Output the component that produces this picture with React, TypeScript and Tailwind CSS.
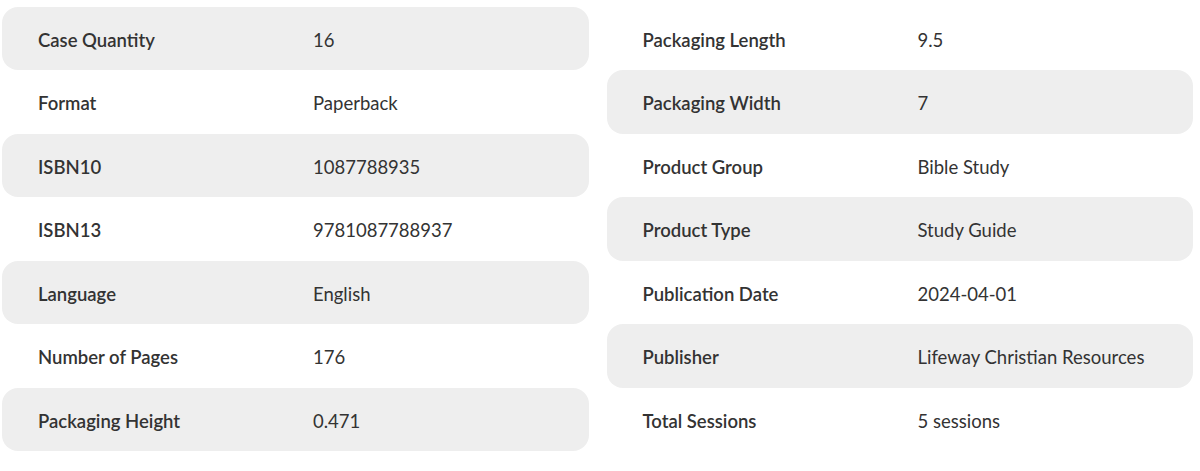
import React from "react";

const left: [string, string][] = [
  ["Case Quantity", "16"],
  ["Format", "Paperback"],
  ["ISBN10", "1087788935"],
  ["ISBN13", "9781087788937"],
  ["Language", "English"],
  ["Number of Pages", "176"],
  ["Packaging Height", "0.471"],
];

const right: [string, string][] = [
  ["Packaging Length", "9.5"],
  ["Packaging Width", "7"],
  ["Product Group", "Bible Study"],
  ["Product Type", "Study Guide"],
  ["Publication Date", "2024-04-01"],
  ["Publisher", "Lifeway Christian Resources"],
  ["Total Sessions", "5 sessions"],
];

function Column({ rows, shadeEven }: { rows: [string, string][]; shadeEven: boolean }) {
  return (
    <div className="flex flex-col">
      {rows.map(([k, v], i) => {
        const shaded = shadeEven ? i % 2 === 0 : i % 2 === 1;
        return (
          <div
            key={k}
            className={
              "flex h-[63.5px] items-center rounded-[16px] pl-[36px] pt-[5px] " +
              (shaded ? "bg-[#eeeeee]" : "")
            }
          >
            <div className="w-[275px] text-[18.5px] font-semibold text-[#333333]">{k}</div>
            <div className="text-[18.5px] font-normal text-[#333333]">{v}</div>
          </div>
        );
      })}
    </div>
  );
}

export default function App() {
  return (
    <div
      className="grid h-[471px] w-[1200px] grid-cols-2 gap-[18px] bg-white pl-[2px] pr-[7px] pt-[6.5px]"
      style={{ fontFamily: "Lato, 'Noto Sans', sans-serif" }}
    >
      <Column rows={left} shadeEven={true} />
      <Column rows={right} shadeEven={false} />
    </div>
  );
}
